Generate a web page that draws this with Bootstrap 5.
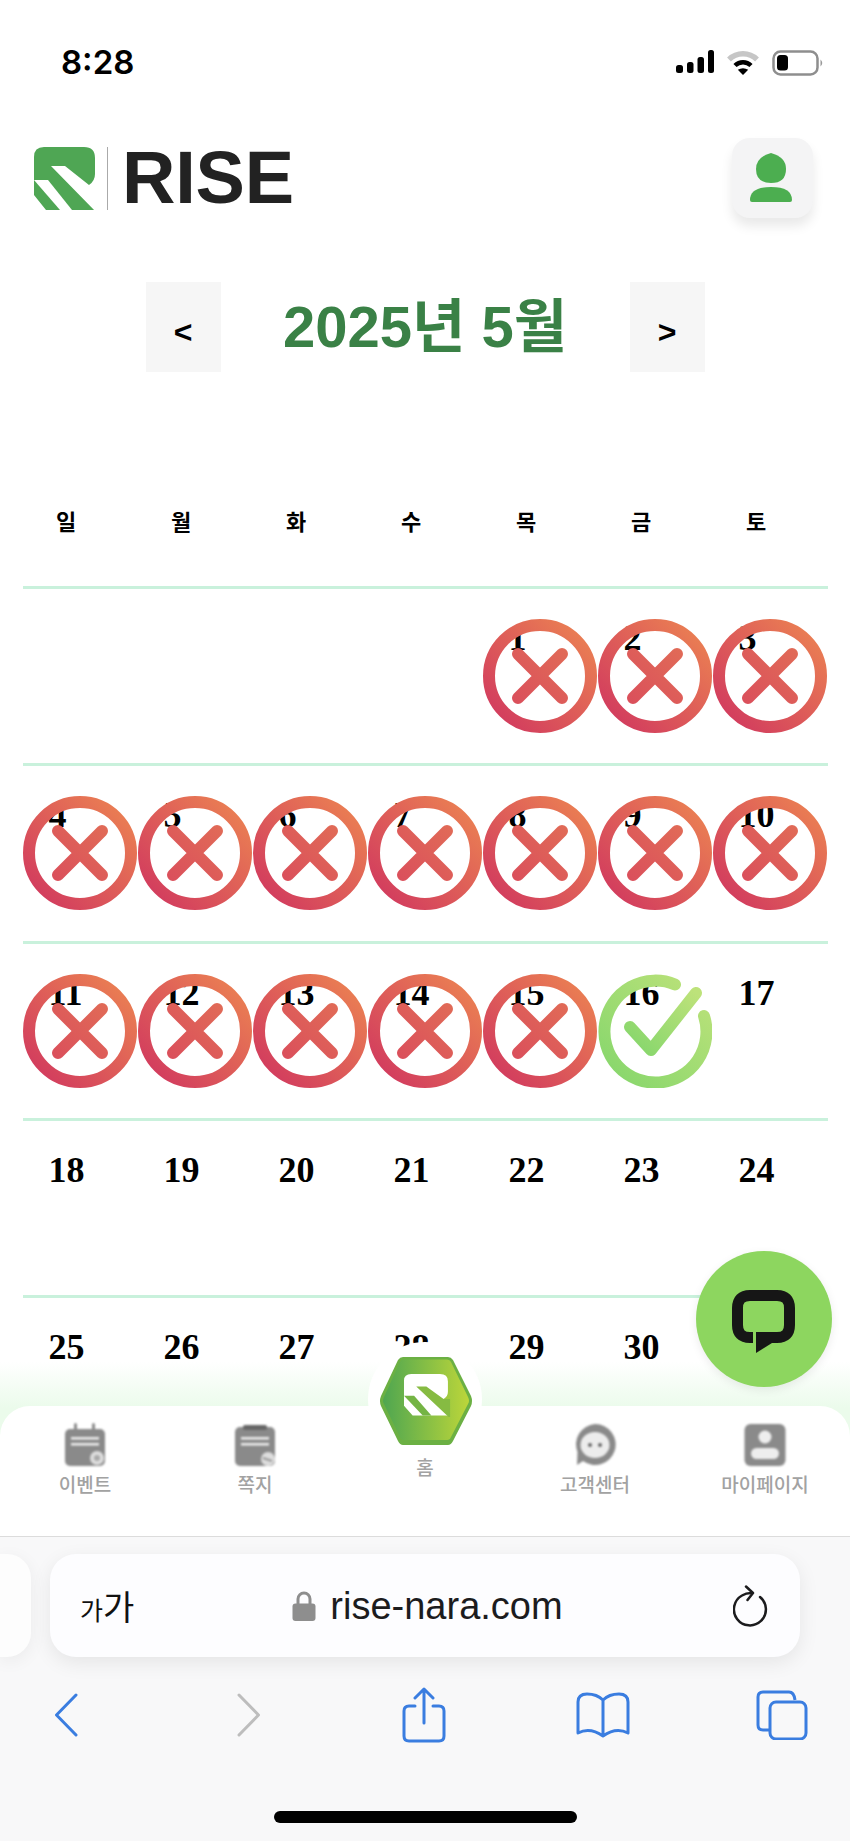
<!DOCTYPE html>
<html lang="ko">
<head>
  <meta charset="UTF-8" />
  <meta name="viewport" content="width=device-width, initial-scale=1.0"/>
  <title>RISE 출석 달력</title>
  <link href="https://cdn.jsdelivr.net/npm/bootstrap@5.3.3/dist/css/bootstrap.min.css" rel="stylesheet">
  <script src="https://cdn.jsdelivr.net/npm/bootstrap@5.3.3/dist/js/bootstrap.bundle.min.js"></script>
  <style>
    body{margin:0;background:#fff;font-family:"Liberation Sans","Noto Sans CJK KR",sans-serif;}
    .phone{width:850px;height:1841px;overflow:hidden;position:relative;}

    /* status bar */
    .status-row{height:138px;padding:50px 26px 0 61px;}
    .clock{font-family:Inter,sans-serif;font-weight:600;font-size:33px;line-height:24px;color:#000;}

    /* logo + profile */
    .head-row{height:80px;padding:0 37px 0 34px;}
    .logo-word{font-weight:700;font-size:74px;line-height:54px;color:#222;letter-spacing:-.2px;}
    .logo-line{width:1px;height:63px;background:#aaa;margin:0 14px 0 11px;}
    .profile-btn{width:81px;height:80px;border-radius:18px;background:#f4f4f5;box-shadow:0 8px 12px rgba(0,0,0,.09);}
    .profile-btn svg{margin-right:4px;}

    /* month title */
    .month-row{margin-top:64px;height:90px;}
    .step-btn{width:75px;height:90px;border:0;border-radius:0;background:#f6f6f6;color:#000;font-weight:700;font-size:32px;padding:10px 0 0;}
    .month-title{width:409px;margin:0;text-align:center;color:#3a8146;font-weight:700;font-size:58px;line-height:90px;padding-bottom:14px;}

    /* calendar */
    .cal-wrap{margin:85px 0 0 22.5px;width:805px;}
    .cal-table{table-layout:fixed;width:805px;margin:0;border-collapse:separate;border-spacing:0;font-family:"Liberation Serif","Noto Sans CJK KR",serif;color:#000;}
    .cal-table th,.cal-table td{font-weight:700;background:transparent;box-shadow:none;border-bottom:3px solid #c9f1dc;vertical-align:top;}
    .cal-table th{height:132px;font-size:22px;padding:51px 28px 0 0;line-height:30px;text-align:center;}
    .cal-table td{height:177.3px;font-size:36px;line-height:43px;padding:28px 0 0 26px;text-align:left;position:relative;}
    .cal-table tr:last-child td{border-bottom:0;}
    .stamp{position:absolute;left:0;top:30px;width:114px;height:114px;}

    /* bottom tabs */
    .main-area{height:1406px;overflow:hidden;}
    .tab-dock{position:relative;z-index:2;height:131px;}
    .tab-glow{position:absolute;left:0;right:0;top:-44px;height:80px;background:linear-gradient(rgba(236,251,236,0),#ebfbeb 58%);}
    .tab-nav{position:relative;height:131px;background:#fff;border-radius:30px 30px 0 0;border-bottom:1px solid #dcdcdc;}
    .tab-item{width:170px;text-align:center;color:#a2a2a2;font-size:19px;font-weight:500;line-height:22px;padding-top:17px;}
    .tab-item svg{display:block;margin:0 auto 8px;filter:blur(.9px);}
    .tab-home{padding-top:52px;}
    .home-badge{position:absolute;left:368px;top:-64px;width:114px;height:114px;border-radius:50%;background:#fff;}
    .home-badge svg{position:absolute;left:11px;top:14px;}
    .chat-fab{position:absolute;right:18px;bottom:calc(100% + 19px);width:136px;height:136px;border-radius:50%;background:#8dd65f;box-shadow:0 3px 10px rgba(0,0,0,.08);}
    .chat-fab svg{margin-top:6px;}

    /* browser chrome */
    .browser-bar{height:304px;background:#f8f8f9;padding-top:17px;position:relative;}
    .tab-stub{width:31px;height:103px;background:#fdfdfd;border-radius:0 24px 24px 0;box-shadow:0 4px 18px rgba(0,0,0,.06);}
    .url-box{width:750px;height:103px;margin-left:19px;padding:0 31px 0 30px;background:#fdfdff;border-radius:26px;box-shadow:0 6px 20px rgba(0,0,0,.08);color:#111;}
    .aa-label{width:42px;line-height:1;white-space:nowrap;font-family:"Noto Sans CJK KR",sans-serif;}
    .aa-small{font-size:25px;}
    .aa-big{font-size:34px;}
    .url-text{font-size:38px;line-height:1;color:#1c1c1e;margin-left:14px;}
    .tool-row{margin:28px 0 0 -24px;height:60px;}
    .tool-slot{width:179px;flex-shrink:0;}
    .home-bar{width:303px;height:12px;border-radius:6px;background:#000;margin:66px auto 0;}
  </style>
</head>
<body>
<div class="phone d-flex flex-column">

  <svg width="0" height="0" class="position-absolute">
    <defs>
      <linearGradient id="redGrad" x1="0" y1="1" x2="1" y2="0">
        <stop offset="0" stop-color="#d0365f"/><stop offset="1" stop-color="#ec8452"/>
      </linearGradient>
      <linearGradient id="xGrad" gradientUnits="userSpaceOnUse" x1="20" y1="94" x2="94" y2="20">
        <stop offset="0" stop-color="#d94a5c"/><stop offset="1" stop-color="#e27056"/>
      </linearGradient>
      <linearGradient id="okGrad" x1="0" y1="1" x2="1" y2="0">
        <stop offset="0" stop-color="#85d66c"/><stop offset="1" stop-color="#bde27a"/>
      </linearGradient>
      <linearGradient id="hexGrad" x1="0" y1="0" x2="1" y2="0">
        <stop offset="0" stop-color="#4fa650"/><stop offset="1" stop-color="#bcd63a"/>
      </linearGradient>
      <symbol id="stampNo" viewBox="0 0 114 114">
        <circle cx="57" cy="57" r="51" fill="none" stroke="url(#redGrad)" stroke-width="12"/>
        <path d="M35 35 79 79M79 35 35 79" fill="none" stroke="url(#xGrad)" stroke-width="12" stroke-linecap="round"/>
      </symbol>
      <symbol id="stampOk" viewBox="0 0 114 114">
        <path d="M77 10.500A51 51 0 1 0 106 42" fill="none" stroke="url(#okGrad)" stroke-width="12" stroke-linecap="round"/>
        <path d="M32 53 53 76 98 19" fill="none" stroke="url(#okGrad)" stroke-width="12" stroke-linecap="round" stroke-linejoin="round"/>
      </symbol>
    </defs>
  </svg>

  <div class="main-area">
    <div class="status-row d-flex justify-content-between align-items-start">
      <span class="clock">8:28</span>
      <div class="d-flex align-items-start gap-2">
        <svg width="38" height="24" viewBox="0 0 38 24" fill="#000" class="me-1"><rect x="0" y="15" width="7" height="8" rx="2.5"/><rect x="11" y="12" width="6.500" height="11" rx="2.500"/><rect x="21.500" y="7" width="6.500" height="16" rx="2.500"/><rect x="32" y="0" width="6" height="23" rx="2.500"/></svg>
        <svg width="34" height="25" viewBox="0 0 34 25"><path d="M3 9.500A20 20 0 0 1 31 9.500" fill="none" stroke="#c6c6c6" stroke-width="5.500"/><path d="M9 15.500A11.500 11.500 0 0 1 25 15.500" fill="none" stroke="#000" stroke-width="4.500"/><path d="M17 25 11.800 19.800Q17 16.500 22.200 19.800Z" fill="#000"/></svg>
        <svg width="52" height="26" viewBox="0 0 52 26" class="ms-1"><rect x="1.500" y="1.500" width="44" height="23" rx="7" fill="none" stroke="#8e8e8e" stroke-width="2.500"/><rect x="5" y="5" width="11" height="15.500" rx="3.500" fill="#000"/><path d="M48.500 9.500Q52 13 48.500 16.500Z" fill="#999"/></svg>
      </div>
    </div>

    <div class="head-row d-flex justify-content-between align-items-center">
      <div class="d-flex align-items-center">
        <svg width="62" height="63" viewBox="0 0 62 63">
          <path d="M0 10Q0 0 10 0H50Q61 0 61 11V27Q61 34 55 38L62 63H12L0 48Z" fill="#4fa654"/>
          <path d="M17 19H31L55 38 64 38V65H62Z" fill="#fff"/>
          <path d="M0 33H14L38 63H26Z" fill="#fff"/>
        </svg>
        <div class="logo-line"></div>
        <span class="logo-word">RISE</span>
      </div>
      <button class="profile-btn btn p-0 d-flex align-items-center justify-content-center" type="button" aria-label="프로필">
        <svg width="44" height="50" viewBox="0 0 44 50" fill="#4cae50"><path d="M22 0Q37 4 37 16 37 30 22 30 7 30 7 16 7 4 22 0Z"/><path d="M1 47Q1 34 22 34 43 34 43 47Q43 49 41 49H3Q1 49 1 47Z"/></svg>
      </button>
    </div>

    <div class="month-row d-flex justify-content-center">
      <button class="step-btn btn" type="button">&lt;</button>
      <h1 class="month-title">2025년 5월</h1>
      <button class="step-btn btn" type="button">&gt;</button>
    </div>

    <div class="cal-wrap">
      <table class="cal-table table">
        <thead><tr><th>일</th><th>월</th><th>화</th><th>수</th><th>목</th><th>금</th><th>토</th></tr></thead>
        <tbody id="calBody"></tbody>
      </table>
    </div>
  </div>

  <div class="tab-dock">
    <div class="tab-glow"></div>
    <nav class="tab-nav d-flex">
      <div class="tab-item">
        <svg width="42" height="44" viewBox="0 0 42 44" fill="#8a8a8a"><rect x="1" y="6" width="40" height="37" rx="5"/><rect x="10" y="0" width="3" height="10" rx="1.500"/><rect x="28" y="0" width="3" height="10" rx="1.500"/><rect x="7" y="14" width="28" height="2.500" fill="#eee"/><rect x="7" y="20" width="28" height="2.500" fill="#eee"/><circle cx="33" cy="35" r="7" fill="#ddd"/><circle cx="33" cy="35" r="3" fill="#aaa"/></svg>
        이벤트
      </div>
      <div class="tab-item">
        <svg width="42" height="44" viewBox="0 0 42 44" fill="#8a8a8a"><rect x="1" y="4" width="40" height="39" rx="5"/><rect x="9" y="2" width="24" height="5" rx="2" fill="#666"/><rect x="7" y="14" width="28" height="2.500" fill="#eee"/><rect x="7" y="20" width="28" height="2.500" fill="#eee"/><circle cx="34" cy="36" r="7" fill="#ddd"/><path d="M29 35 38 38" stroke="#999" stroke-width="2"/></svg>
        쪽지
      </div>
      <div class="tab-item tab-home">홈</div>
      <div class="tab-item">
        <svg width="42" height="44" viewBox="0 0 42 44"><path d="M21 1A20.500 20.500 0 1 1 9 38L3 42 3.500 29A20.500 20.500 0 0 1 21 1Z" fill="#8a8a8a"/><ellipse cx="21" cy="22" rx="14.500" ry="13" fill="#ececec"/><circle cx="16" cy="22" r="2" fill="#666"/><circle cx="26" cy="22" r="2" fill="#666"/></svg>
        고객센터
      </div>
      <div class="tab-item">
        <svg width="42" height="44" viewBox="0 0 42 44"><rect x="0.500" y="1" width="41" height="42" rx="6" fill="#8a8a8a"/><circle cx="21" cy="14" r="6.500" fill="#eee"/><rect x="7" y="25" width="28" height="11" rx="5.500" fill="#eee"/></svg>
        마이페이지
      </div>
      <div class="home-badge">
        <svg width="94" height="90" viewBox="0 0 94 90">
          <path d="M24 1H69Q72 1 74 4L92 40Q94 45 92 50L74 85Q72 89 69 89H24Q21 89 19 85L2 50Q0 45 2 40L19 4Q21 1 24 1Z" fill="#6bb043"/>
          <path d="M25 3.500H68Q71 3.500 72 6L89 41Q91 45 89 48L72 81Q71 84 68 84H25Q22 84 21 81L5 48Q3 45 5 41L21 6Q22 3.500 25 3.500Z" fill="url(#hexGrad)"/>
          <g transform="translate(25 18) scale(.72 .66)">
            <path d="M0 10Q0 0 10 0H50Q61 0 61 11V27Q61 34 55 38L62 63H12L0 48Z" fill="#fff"/>
            <path d="M17 19H31L55 38 64 38V65H62Z" fill="#86bb42"/>
            <path d="M0 33H14L38 63H26Z" fill="#74b444"/>
          </g>
        </svg>
      </div>
      <div class="chat-fab d-flex align-items-center justify-content-center">
        <svg width="64" height="64" viewBox="0 0 64 64"><path d="M21 47.500H18Q5.500 47.500 5.500 35V18Q5.500 5.500 18 5.500H45Q57.500 5.500 57.500 18V35Q57.500 47.500 45 47.500H30" fill="none" stroke="#161616" stroke-width="11"/><path d="M24 42H40V53L24 63Z" fill="#161616"/></svg>
      </div>
    </nav>
  </div>

  <div class="browser-bar">
    <div class="d-flex">
      <div class="tab-stub"></div>
      <div class="url-box d-flex align-items-center justify-content-between">
        <span class="aa-label"><span class="aa-small">가</span><span class="aa-big">가</span></span>
        <div class="d-flex align-items-center">
          <svg width="24" height="30" viewBox="0 0 24 30"><path d="M6 14V8A6 6 0 0 1 18 8V14" fill="none" stroke="#8e8e8e" stroke-width="3"/><rect x="0.500" y="12.500" width="23" height="17.500" rx="3" fill="#8e8e8e"/></svg>
          <span class="url-text">rise-nara.com</span>
        </div>
        <svg width="36" height="42" viewBox="0 0 36 42" fill="none" stroke="#1c1c1e" stroke-width="2.500" stroke-linecap="round" stroke-linejoin="round"><path d="M27 12A16 16 0 1 1 9 10.500Q13 8 18 8"/><path d="M13 1.500 20 8 14.500 15"/></svg>
      </div>
    </div>
    <div class="tool-row d-flex align-items-center">
      <div class="tool-slot text-center"><svg width="24" height="44" viewBox="0 0 24 44" fill="none" stroke="#3a7de0" stroke-width="3" stroke-linecap="round" stroke-linejoin="round"><path d="M22 2 2.500 22 22 42"/></svg></div>
      <div class="tool-slot text-center"><svg class="ms-2" width="24" height="44" viewBox="0 0 24 44" fill="none" stroke="#bdbdbd" stroke-width="3" stroke-linecap="round" stroke-linejoin="round"><path d="M2 2 21.500 22 2 42"/></svg></div>
      <div class="tool-slot text-center"><svg width="44" height="56" viewBox="0 0 44 56" fill="none" stroke="#3a7de0" stroke-width="3" stroke-linecap="round" stroke-linejoin="round"><path d="M13 19H7Q2 19 2 24V49Q2 54 7 54H37Q42 54 42 49V24Q42 19 37 19H31"/><path d="M22 36V2M13 11 22 2 31 11"/></svg></div>
      <div class="tool-slot text-center"><svg width="54" height="46" viewBox="0 0 54 46" fill="none" stroke="#3a7de0" stroke-width="3" stroke-linecap="round" stroke-linejoin="round"><path d="M27 8Q21 2 11 2 2 2 2 10V41Q14 35 27 44 40 35 52 41V10Q52 2 43 2 33 2 27 8ZM27 8V44"/></svg></div>
      <div class="tool-slot text-center"><svg width="52" height="50" viewBox="0 0 52 50" fill="none" stroke="#3a7de0" stroke-width="3" stroke-linejoin="round"><path d="M14 40H7Q2 40 2 35V7Q2 2 7 2H33Q38 2 39 10"/><rect x="14" y="12" width="36" height="37" rx="6"/></svg></div>
    </div>
    <div class="home-bar"></div>
  </div>
</div>

<script>
  // calendar rows: May 2025 starts on Thursday, 1-15 missed, 16 checked
  const body = document.getElementById('calBody');
  const stamp = id => `<svg class="stamp"><use href="#${id}"/></svg>`;
  let html = '', day = 1;
  for (let w = 0; w < 5; w++) {
    html += '<tr>';
    for (let d = 0; d < 7; d++) {
      if ((w === 0 && d < 4) || day > 31) { html += '<td></td>'; continue; }
      const mark = day <= 15 ? stamp('stampNo') : day === 16 ? stamp('stampOk') : '';
      html += `<td>${day}${mark}</td>`;
      day++;
    }
    html += '</tr>';
  }
  body.innerHTML = html;
</script>
</body>
</html>
